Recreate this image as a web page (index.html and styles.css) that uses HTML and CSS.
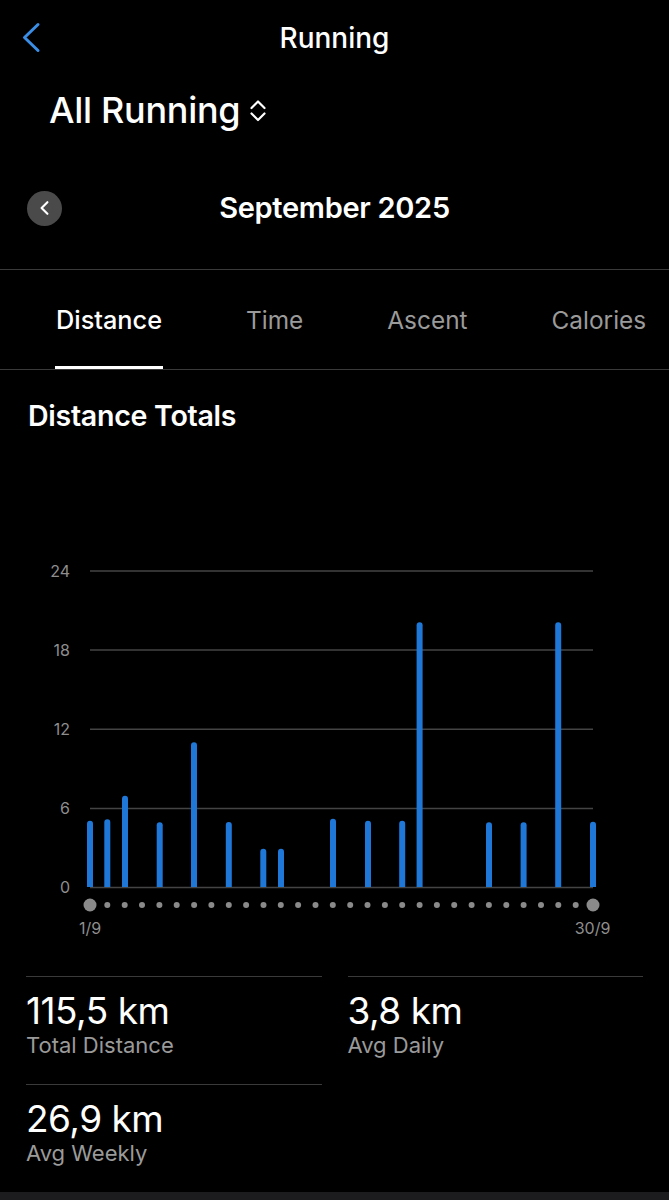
FILE: index.html
```html
<!DOCTYPE html>
<html lang="en">
<head>
<meta charset="utf-8">
<title>Running</title>
<link rel="stylesheet" href="styles.css">
</head>
<body>
<div class="screen">
  <header class="topbar">
    <div class="topbar-left">
      <svg class="back" width="20" height="32" viewBox="0 0 20 32" aria-hidden="true">
        <polyline points="16,2.5 2.5,15.5 16,28.5" fill="none" stroke="#3a8ee6" stroke-width="3" stroke-linecap="round" stroke-linejoin="round"/>
      </svg>
    </div>
    <h1 class="title">Running</h1>
    <div></div>
  </header>

  <div class="selector">
    <span class="selector-label">All Running</span>
    <svg class="updown" width="16" height="22" viewBox="0 0 16 22" aria-hidden="true">
      <polyline points="1.5,8 8,1.5 14.5,8" fill="none" stroke="#fff" stroke-width="2.2" stroke-linecap="round" stroke-linejoin="round"/>
      <polyline points="1.5,13.5 8,20 14.5,13.5" fill="none" stroke="#fff" stroke-width="2.2" stroke-linecap="round" stroke-linejoin="round"/>
    </svg>
  </div>

  <div class="month">
    <div class="month-left">
      <span class="round-btn">
        <svg width="36" height="36" viewBox="0 0 36 36" aria-hidden="true">
          <polyline points="21,12 15,18 21,24" fill="none" stroke="#fff" stroke-width="2.2" stroke-linecap="round" stroke-linejoin="round"/>
        </svg>
      </span>
    </div>
    <div class="month-title">September 2025</div>
    <div></div>
  </div>

  <nav class="tabs">
    <span class="tab active">Distance</span>
    <span class="tab">Time</span>
    <span class="tab">Ascent</span>
    <span class="tab">Calories</span>
  </nav>

  <h2 class="section-title">Distance Totals</h2>

  <svg class="chart" width="669" height="542" viewBox="0 0 669 542">
    <g class="grid" stroke="#444" stroke-width="1.5">
      <line x1="90" y1="137" x2="593" y2="137"/>
      <line x1="90" y1="216" x2="593" y2="216"/>
      <line x1="90" y1="295.3" x2="593" y2="295.3"/>
      <line x1="90" y1="374.5" x2="593" y2="374.5"/>
      <line x1="90" y1="453.5" x2="593" y2="453.5"/>
    </g>
    <g class="ylabels" text-anchor="end">
      <text x="70" y="143">24</text>
      <text x="70" y="222">18</text>
      <text x="70" y="301">12</text>
      <text x="70" y="380">6</text>
      <text x="70" y="459">0</text>
    </g>
    <g class="bars" fill="#1f78d8">
      <path d="M87 453 V389.7 A3 3 0 0 1 93 389.7 V453 Z"/>
      <path d="M104.3 453 V388.3 A3 3 0 0 1 110.3 388.3 V453 Z"/>
      <path d="M122 453 V364.7 A3 3 0 0 1 128 364.7 V453 Z"/>
      <path d="M156.7 453 V391.3 A3 3 0 0 1 162.7 391.3 V453 Z"/>
      <path d="M191 453 V311.3 A3 3 0 0 1 197 311.3 V453 Z"/>
      <path d="M225.8 453 V391 A3 3 0 0 1 231.8 391 V453 Z"/>
      <path d="M260.3 453 V417.7 A3 3 0 0 1 266.3 417.7 V453 Z"/>
      <path d="M278 453 V417.7 A3 3 0 0 1 284 417.7 V453 Z"/>
      <path d="M330 453 V387.7 A3 3 0 0 1 336 387.7 V453 Z"/>
      <path d="M365 453 V389.7 A3 3 0 0 1 371 389.7 V453 Z"/>
      <path d="M399.2 453 V389.7 A3 3 0 0 1 405.2 389.7 V453 Z"/>
      <path d="M416.6 453 V191.3 A3 3 0 0 1 422.6 191.3 V453 Z"/>
      <path d="M486 453 V391.3 A3 3 0 0 1 492 391.3 V453 Z"/>
      <path d="M520.6 453 V391.3 A3 3 0 0 1 526.6 391.3 V453 Z"/>
      <path d="M555.2 453 V191.3 A3 3 0 0 1 561.2 191.3 V453 Z"/>
      <path d="M590 453 V390.7 A3 3 0 0 1 596 390.7 V453 Z"/>
    </g>
    <g class="dots" fill="#8a8a8a">
      <circle cx="90" cy="471" r="6.5"/>
      <circle cx="107.3" cy="471" r="3"/>
      <circle cx="124.7" cy="471" r="3"/>
      <circle cx="142" cy="471" r="3"/>
      <circle cx="159.4" cy="471" r="3"/>
      <circle cx="176.7" cy="471" r="3"/>
      <circle cx="194.1" cy="471" r="3"/>
      <circle cx="211.4" cy="471" r="3"/>
      <circle cx="228.8" cy="471" r="3"/>
      <circle cx="246.1" cy="471" r="3"/>
      <circle cx="263.5" cy="471" r="3"/>
      <circle cx="280.8" cy="471" r="3"/>
      <circle cx="298.1" cy="471" r="3"/>
      <circle cx="315.5" cy="471" r="3"/>
      <circle cx="332.8" cy="471" r="3"/>
      <circle cx="350.2" cy="471" r="3"/>
      <circle cx="367.5" cy="471" r="3"/>
      <circle cx="384.9" cy="471" r="3"/>
      <circle cx="402.2" cy="471" r="3"/>
      <circle cx="419.6" cy="471" r="3"/>
      <circle cx="436.9" cy="471" r="3"/>
      <circle cx="454.2" cy="471" r="3"/>
      <circle cx="471.6" cy="471" r="3"/>
      <circle cx="488.9" cy="471" r="3"/>
      <circle cx="506.3" cy="471" r="3"/>
      <circle cx="523.6" cy="471" r="3"/>
      <circle cx="541" cy="471" r="3"/>
      <circle cx="558.3" cy="471" r="3"/>
      <circle cx="575.7" cy="471" r="3"/>
      <circle cx="593" cy="471" r="6.5"/>
    </g>
    <g class="xlabels" text-anchor="middle">
      <text x="90" y="500">1/9</text>
      <text x="592.5" y="500">30/9</text>
    </g>
  </svg>

  <section class="stats">
    <div class="stat">
      <div class="stat-value">115,5 km</div>
      <div class="stat-label">Total Distance</div>
    </div>
    <div class="stat">
      <div class="stat-value">3,8 km</div>
      <div class="stat-label">Avg Daily</div>
    </div>
    <div class="stat">
      <div class="stat-value">26,9 km</div>
      <div class="stat-label">Avg Weekly</div>
    </div>
  </section>

  <div class="bottom-strip"></div>
</div>
</body>
</html>
```

FILE: styles.css
```css
* { box-sizing: border-box; }

html, body {
  margin: 0;
  padding: 0;
  background: #000;
}

body {
  font-family: "Inter", "Roboto", "Liberation Sans", sans-serif;
  color: #fff;
}

.screen {
  width: 669px;
  height: 1200px;
  overflow: hidden;
  background: #000;
}

.topbar {
  height: 76px;
  display: grid;
  grid-template-columns: 1fr auto 1fr;
  align-items: center;
}

.topbar-left {
  padding-left: 22px;
  display: flex;
  align-items: center;
}

.back { display: block; }

.title {
  margin: 0;
  font-size: 28px;
  font-weight: 500;
  line-height: 34px;
  letter-spacing: 0;
}

.selector {
  height: 68px;
  padding-left: 49px;
  display: flex;
  align-items: center;
  gap: 10px;
}

.selector-label {
  font-size: 36px;
  font-weight: 500;
  letter-spacing: -0.3px;
  line-height: 44px;
}

.updown { display: block; margin-top: 2px; }

.month {
  padding: 36px 0 33px;
  height: 125px;
  display: grid;
  grid-template-columns: 1fr auto 1fr;
  align-items: center;
}

.month-left {
  padding-left: 27px;
  display: flex;
  align-items: center;
}

.round-btn {
  width: 35px;
  height: 35px;
  border-radius: 50%;
  background: #4a4a4a;
  display: flex;
  align-items: center;
  justify-content: center;
}

.round-btn svg { display: block; }

.month-title {
  font-size: 29px;
  font-weight: 600;
  letter-spacing: -0.3px;
  line-height: 36px;
}

.tabs {
  height: 101px;
  border-top: 1px solid #3a3a3a;
  border-bottom: 1px solid #3a3a3a;
  display: flex;
  align-items: stretch;
  padding-left: 55px;
  gap: 82px;
}

.tab {
  display: flex;
  align-items: center;
  padding: 3px 1px 0;
  border-bottom: 3px solid transparent;
  font-size: 24.4px;
  font-weight: 400;
  color: #9a9a9a;
  letter-spacing: 0;
}

.tab.active {
  color: #fff;
  font-size: 25.3px;
  font-weight: 500;
  border-bottom-color: #fff;
}

.section-title {
  margin: 0;
  padding: 28px 0 0 28px;
  height: 64px;
  font-size: 28.6px;
  font-weight: 600;
  line-height: 36px;
  letter-spacing: -0.3px;
}

.chart {
  display: block;
}

.chart text {
  font-family: "Inter", "Roboto", "Liberation Sans", sans-serif;
  font-size: 16px;
  fill: #8e8e8e;
}

.stats {
  display: grid;
  grid-template-columns: 1fr 1fr;
  column-gap: 26px;
  padding: 0 26px;
}

.stat {
  height: 108px;
  border-top: 1px solid #3a3a3a;
  padding-top: 14px;
}

.stat-value {
  font-size: 37px;
  font-weight: 400;
  line-height: 40px;
  letter-spacing: -0.5px;
}

.stat-label {
  font-size: 22px;
  line-height: 28px;
  color: #9a9a9a;
  letter-spacing: 0;
}

.bottom-strip {
  height: 8px;
  background: #1c1c1e;
}
```
